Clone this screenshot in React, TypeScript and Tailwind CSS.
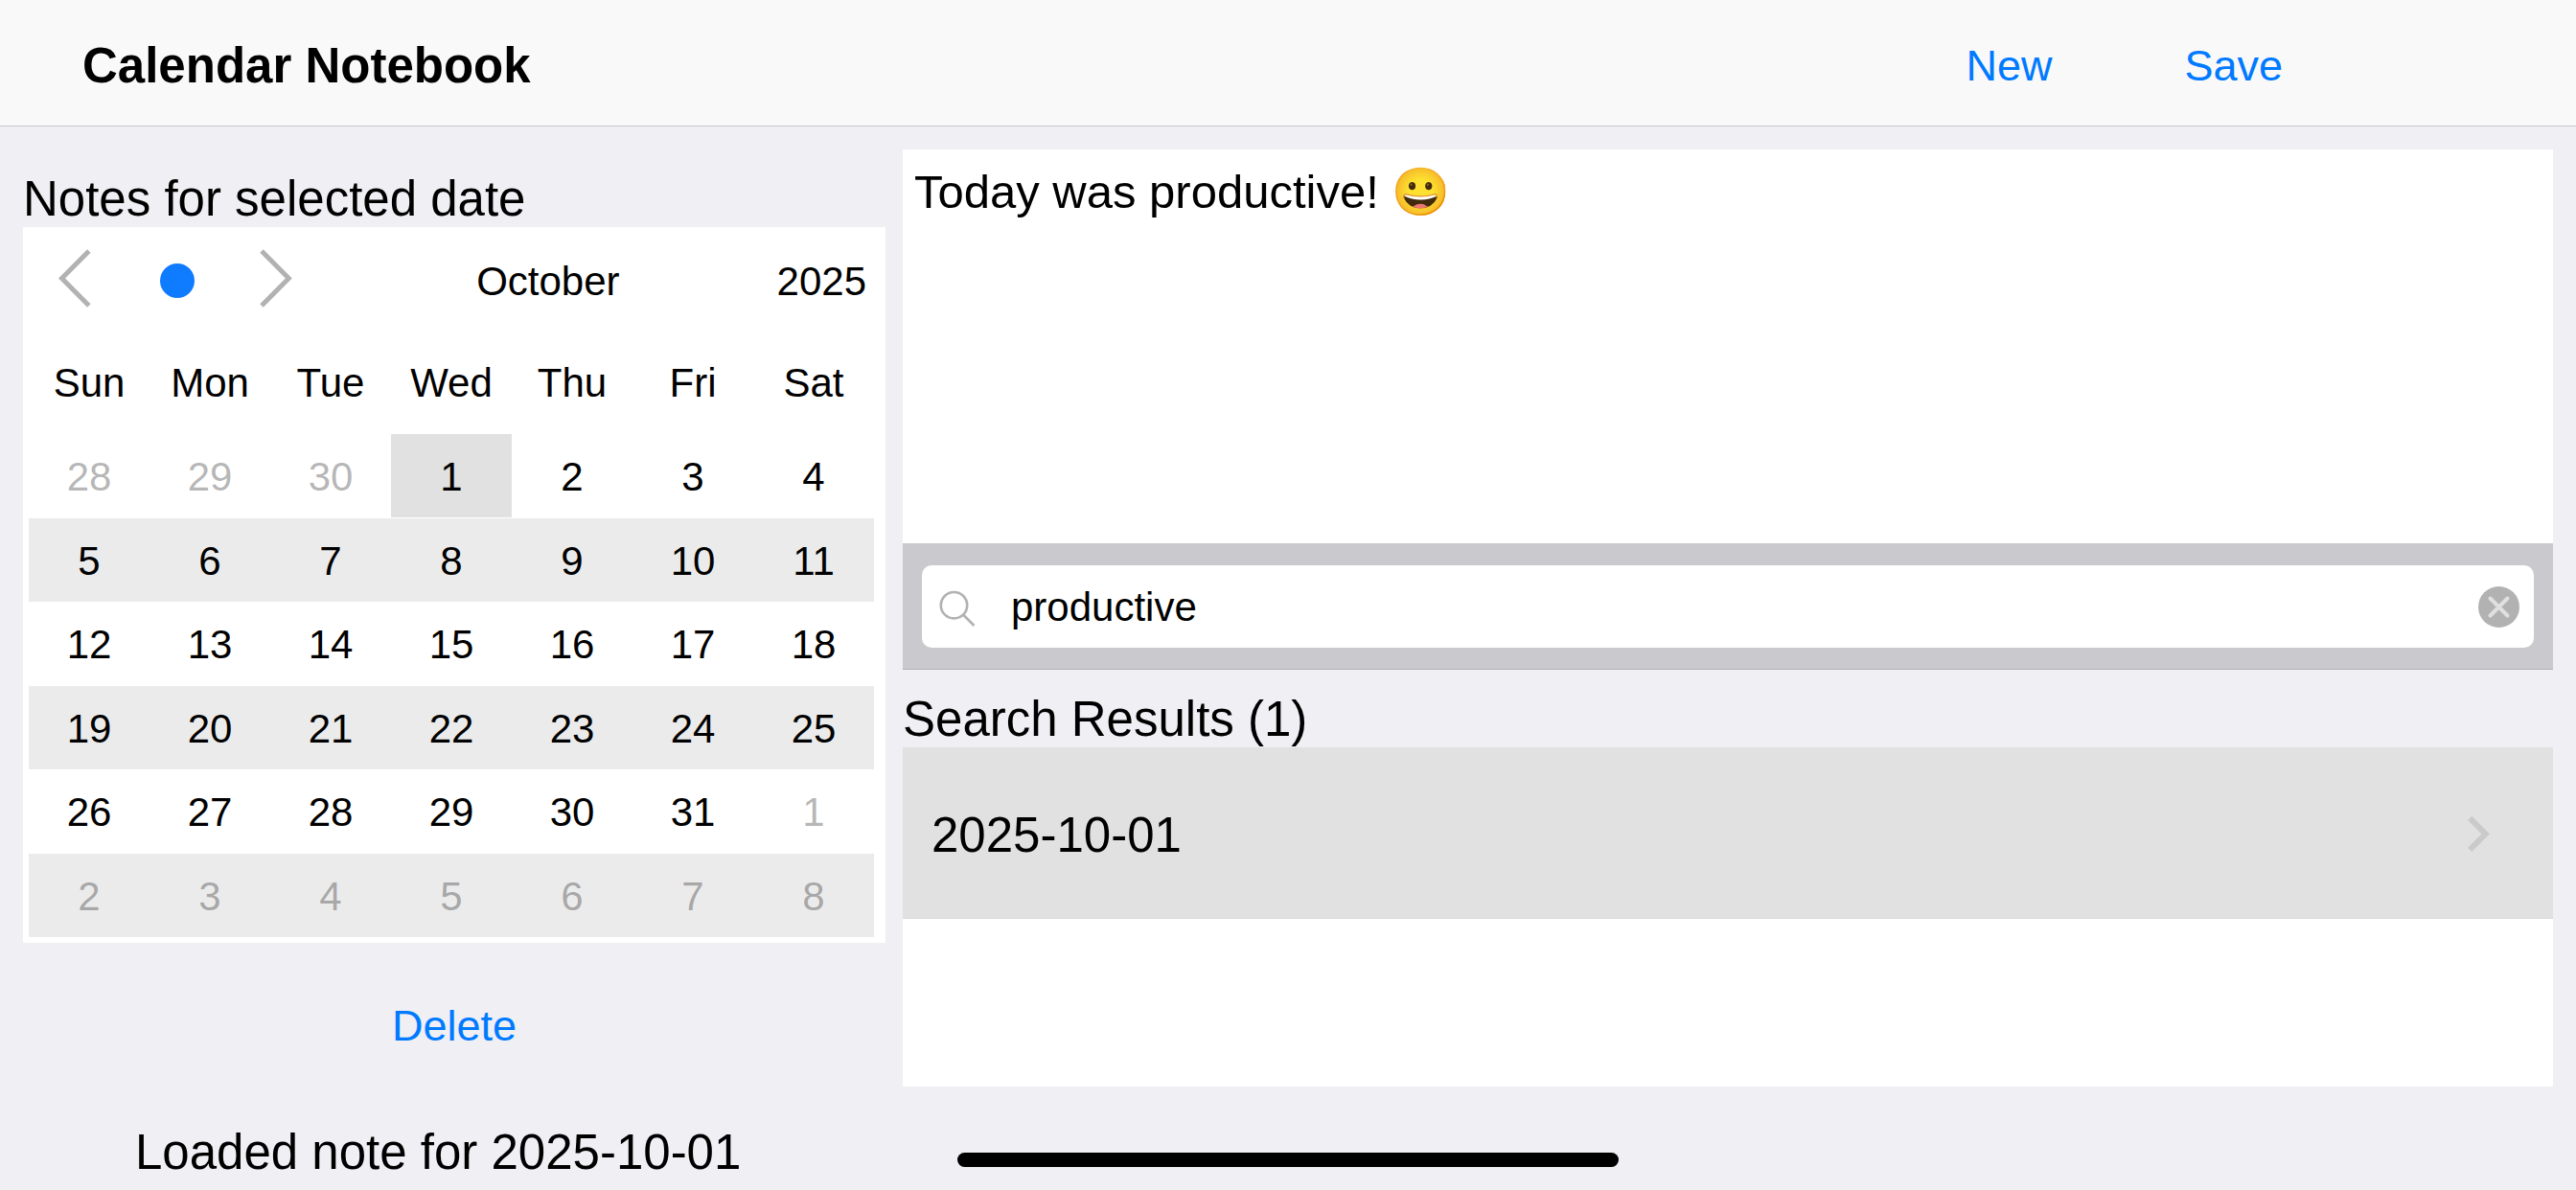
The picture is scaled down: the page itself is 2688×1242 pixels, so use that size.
import React, { useState } from 'react'

interface Day {
  day: number
  month: number
}

const NOTE_TEXT = 'Today was productive! 😀'

const weekDays = ['Sun', 'Mon', 'Tue', 'Wed', 'Thu', 'Fri', 'Sat']

// Six weeks starting on the Sunday before October 1st
const buildWeeks = () => {
  const weeks: Day[][] = []
  for (let w = 0; w < 6; w++) {
    const week: Day[] = []
    for (let d = 0; d < 7; d++) {
      const date = new Date(2025, 8, 28 + w * 7 + d)
      week.push({ day: date.getDate(), month: date.getMonth() })
    }
    weeks.push(week)
  }
  return weeks
}

const weeks = buildWeeks()

function Calendar() {
  const [selected, setSelected] = useState('9-1')

  return (
    <div className="bg-white pb-1.5 text-[42px] leading-[48px]">
      {/* Month navigation */}
      <div className="flex h-[112px] items-center pr-5 pl-[22px]">
        <button aria-label="Previous month" className="h-16 w-16">
          <svg className="h-16 w-16 overflow-visible" viewBox="0 0 64 64" fill="none" stroke="#b2b2b2" strokeWidth="5">
            <path d="M46.800 1 L18.500 29.500 L46.800 58" />
          </svg>
        </button>
        <button aria-label="Today" className="ml-[57px] h-9 w-9 rounded-full bg-[#0f7bff]"></button>
        <button aria-label="Next month" className="ml-[53px] h-16 w-16">
          <svg className="h-16 w-16 overflow-visible" viewBox="0 0 64 64" fill="none" stroke="#b2b2b2" strokeWidth="5">
            <path d="M17 1 L45.300 29.500 L17 58" />
          </svg>
        </button>
        <div className="flex flex-1 justify-end pt-0.5">
          <button>October</button>
          <button className="ml-[164px]">2025</button>
        </div>
      </div>

      <div className="pr-3 pl-1.5">
        <table className="w-full table-fixed">
          <thead>
            <tr className="h-[104px]">
              {weekDays.map((name) => (
                <th key={name} className="p-0 pb-0.5 text-center font-normal">{name}</th>
              ))}
            </tr>
          </thead>
          <tbody>
            {weeks.map((week, index) => (
              <tr key={index} className={index % 2 ? 'h-[87px] bg-[#ebebeb]' : 'h-[88px]'}>
                {week.map((item) => {
                  const id = `${item.month}-${item.day}`
                  return (
                    <td key={id} className="p-0 align-top">
                      <button
                        onClick={() => setSelected(id)}
                        className={`block h-[87px] w-full pt-0.5 ${item.month === 9 ? 'text-black' : 'text-black/30'} ${selected === id ? 'bg-[#e1e1e1]' : ''}`}
                      >
                        {item.day}
                      </button>
                    </td>
                  )
                })}
              </tr>
            ))}
          </tbody>
        </table>
      </div>
    </div>
  )
}

export default function App() {
  const [note, setNote] = useState(NOTE_TEXT)
  const [query, setQuery] = useState('productive')

  return (
    <div className="min-h-screen bg-[#efeff4] font-['Liberation_Sans',Arial,sans-serif] text-black">
      {/* Top bar */}
      <header className="flex h-[132px] items-center justify-between border-b border-[#c8c7cc] bg-[#f9f9f9] pt-1.5 pr-[306px] pl-[86px]">
        <h1 className="text-[51px] leading-[58px] font-bold">Calendar Notebook</h1>
        <div className="flex gap-[138px] text-[45px] leading-[52px] text-[#007aff]">
          <button>New</button>
          <button>Save</button>
        </div>
      </header>

      <main className="grid grid-cols-[900fr_1722fr] gap-[18px] px-6 pt-6">
        {/* Left side: calendar and actions */}
        <section>
          <h2 className="flex h-[81px] items-end text-[51px] leading-[58px]">Notes for selected date</h2>
          <Calendar />
          <button className="mt-9 block h-[102px] w-full text-[45px] leading-[52px] text-[#007aff]">Delete</button>
          <p className="mt-[52px] pl-[117px] text-[51px] leading-[58px]">Loaded note for 2025-10-01</p>
        </section>

        {/* Right side: note editor and search */}
        <section>
          <textarea
            aria-label="Note"
            value={note}
            onChange={(e) => setNote(e.target.value)}
            className="block h-[411px] w-full resize-none bg-white px-3 pt-[15px] text-[49px] leading-[58px] outline-none"
          />

          <div className="border-b border-[#b2b2b2] bg-[#c9c9ce] px-5 pt-[23px] pb-[22px]">
            <div className="flex h-[86px] items-center rounded-[10px] bg-white pr-[15px] pl-[19px]">
              <svg className="h-[38px] w-[38px] overflow-visible" viewBox="0 0 38 38" fill="none" stroke="#b2b2b2" strokeWidth="2.600">
                <circle cx="14.500" cy="17.700" r="13.700" />
                <path d="M24 27.500 L35.500 39" />
              </svg>
              <input
                type="text"
                aria-label="Search notes"
                value={query}
                onChange={(e) => setQuery(e.target.value)}
                className="ml-9 min-w-0 flex-1 pt-0.5 text-[42px] leading-[48px] outline-none"
              />
              <button aria-label="Clear search" onClick={() => setQuery('')}>
                <svg className="h-[43px] w-[43px]" viewBox="0 0 43 43">
                  <circle cx="21.500" cy="21.500" r="21.500" fill="#b2b2b2" />
                  <path d="M12.500 12.500 L30.500 30.500 M30.500 12.500 L12.500 30.500" stroke="#e0e0e0" strokeWidth="4" strokeLinecap="round" />
                </svg>
              </button>
            </div>
          </div>

          <h2 className="flex h-[81px] items-end text-[51px] leading-[58px]">Search Results (1)</h2>
          <div className="h-[354px] bg-white">
            <button className="flex h-[179px] w-full items-center justify-between border-b border-[#d9d9d9] bg-[#e1e1e1] pt-1.5 pr-[65px] pl-[30px] text-[51px] leading-[58px]">
              2025-10-01
              <svg className="h-[38px] w-6 overflow-visible" viewBox="0 0 24 38" fill="none" stroke="#cacaca" strokeWidth="6">
                <path d="M2.200 0.800 L18.700 17.300 L2.200 33.800" />
              </svg>
            </button>
          </div>
        </section>
      </main>

      {/* Home indicator */}
      <div className="fixed bottom-6 left-1/2 h-[15px] w-[690px] -translate-x-1/2 rounded-full bg-black"></div>
    </div>
  )
}
